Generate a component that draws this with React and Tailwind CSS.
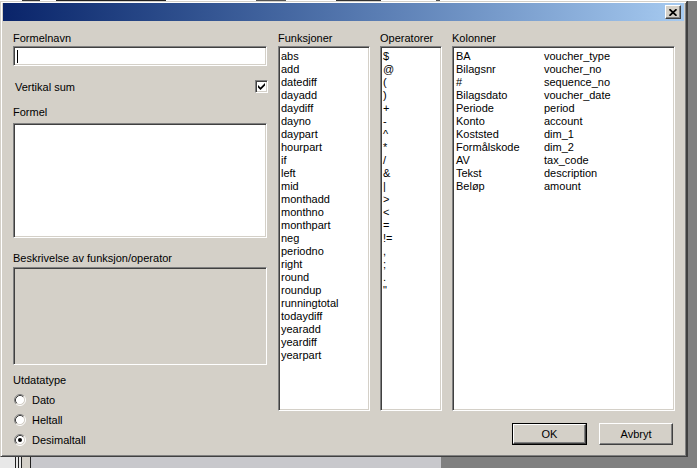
const funksjoner = [
  'abs', 'add', 'datediff', 'dayadd', 'daydiff', 'dayno', 'daypart', 'hourpart', 'if', 'left', 'mid',
  'monthadd', 'monthno', 'monthpart', 'neg', 'periodno', 'right', 'round', 'roundup', 'runningtotal',
  'todaydiff', 'yearadd', 'yeardiff', 'yearpart',
]

const operatorer = ['$', '@', '(', ')', '+', '-', '^', '*', '/', '&', '|', '>', '<', '=', '!=', ',', ';', '.', '"']

const kolonner = [
  ['BA', 'voucher_type'],
  ['Bilagsnr', 'voucher_no'],
  ['#', 'sequence_no'],
  ['Bilagsdato', 'voucher_date'],
  ['Periode', 'period'],
  ['Konto', 'account'],
  ['Koststed', 'dim_1'],
  ['Formålskode', 'dim_2'],
  ['AV', 'tax_code'],
  ['Tekst', 'description'],
  ['Beløp', 'amount'],
]

// classic 3d bevels
const sunken =
  'border border-t-[#808080] border-l-[#808080] border-r-white border-b-white shadow-[inset_1px_1px_0_#404040,inset_-1px_-1px_0_#d4d0c8]'
const raised =
  'border border-t-white border-l-white border-r-[#404040] border-b-[#404040] shadow-[inset_-1px_-1px_0_#808080]'

function Radio({ checked, label }) {
  return (
    <div className="flex h-[20px] items-center">
      <svg width="12" height="12" viewBox="0 0 12 12" className="ml-[1px] mr-[6px]">
        <circle cx="6" cy="6" r="4.5" fill="white" />
        <path d="M9.89 2.11 A5.5 5.5 0 0 0 2.11 9.89" fill="none" stroke="#808080" strokeWidth="1" />
        <path d="M2.11 9.89 A5.5 5.5 0 0 0 9.89 2.11" fill="none" stroke="#ffffff" strokeWidth="1" />
        <path d="M9.18 2.82 A4.5 4.5 0 0 0 2.82 9.18" fill="none" stroke="#404040" strokeWidth="1" />
        <path d="M2.82 9.18 A4.5 4.5 0 0 0 9.18 2.82" fill="none" stroke="#d4d0c8" strokeWidth="1" />
        {checked && <circle cx="6" cy="6" r="2" fill="black" />}
      </svg>
      <span>{label}</span>
    </div>
  )
}

export default function App() {
  return (
    <div className="flex h-[468px] w-[697px] flex-col overflow-hidden bg-[#808080] font-['Liberation_Sans',Arial,sans-serif] text-[11px] leading-[13px] text-black">
      {/* window behind, top edge */}
      <div className="flex h-[1px] shrink-0 bg-white">
        <div className="ml-[22px] w-[18px] bg-[#333]" />
        <div className="ml-[16px] w-[110px] bg-[#222]" />
        <div className="ml-[90px] w-[30px] bg-[#555]" />
        <div className="ml-[50px] w-[45px] bg-[#333]" />
        <div className="ml-[55px] w-[4px] bg-[#555]" />
      </div>

      <div className="flex shrink-0">
        {/* dialog */}
        <div className="flex h-[456px] w-[687px] flex-col border border-t-[#d4d0c8] border-l-[#d4d0c8] border-r-[#404040] border-b-[#404040] bg-[#d4d0c8] px-[2px] pt-[1px] shadow-[inset_1px_1px_0_#fff,inset_-1px_-1px_0_#808080]">
          <div className="flex h-[18px] shrink-0 items-center justify-end bg-linear-to-r from-[#0a246a] to-[#a6caf0] pr-[3px]">
            <div className={`flex h-[14px] w-[16px] items-center justify-center bg-[#d4d0c8] ${raised}`}>
              <svg width="8" height="7" viewBox="0 0 8 7">
                <path d="M0.5 0.2 L7.5 6.8 M7.5 0.2 L0.5 6.8" stroke="black" strokeWidth="1.7" />
              </svg>
            </div>
          </div>

          <div className="flex flex-1 pl-[10px] pr-[8px] pt-[10px]">
            {/* left column */}
            <div className="flex w-[254px] flex-col">
              <div className="h-[13px] pt-[1px]">Formelnavn</div>
              <div className={`mt-[2px] flex h-[20px] items-center bg-white pl-[3px] ${sunken}`}>
                <div className="h-[13px] w-[1px] bg-black" />
              </div>
              <div className="mt-[14px] flex h-[13px] items-center justify-between">
                <span className="ml-[2px] pt-[2px]">Vertikal sum</span>
                <div className={`mr-[-1px] flex h-[13px] w-[13px] items-center justify-center bg-white ${sunken}`}>
                  <svg width="7" height="7" viewBox="0 0 7 7">
                    <path d="M0 2 L0 4.5 L2.5 7 L7 2.5 L7 0 L2.5 4.5 Z" fill="black" />
                  </svg>
                </div>
              </div>
              <div className="mt-[11px] h-[13px] pt-[2px]">Formel</div>
              <div className={`mt-[6px] h-[115px] bg-white ${sunken}`} />
              <div className="mt-[13px] h-[13px] pt-[1px]">Beskrivelse av funksjon/operator</div>
              <div className={`mt-[3px] h-[98px] bg-[#d4d0c8] ${sunken}`} />
              <div className="mt-[8px] h-[13px] pt-[1px]">Utdatatype</div>
              <div className="mt-[4px] flex flex-col">
                <Radio label="Dato" />
                <Radio label="Heltall" />
                <Radio label="Desimaltall" checked />
              </div>
            </div>

            {/* right part */}
            <div className="ml-[11px] flex flex-1 flex-col">
              <div className="flex">
                <div className="flex w-[92px] flex-col">
                  <div className="h-[13px] pt-[1px]">Funksjoner</div>
                  <div className={`mt-[2px] h-[365px] bg-white pl-[2px] pt-[3px] ${sunken}`}>
                    {funksjoner.map((f) => (
                      <div key={f} className="h-[13px] whitespace-nowrap">{f}</div>
                    ))}
                  </div>
                </div>
                <div className="ml-[10px] flex w-[62px] flex-col">
                  <div className="h-[13px] pt-[1px]">Operatorer</div>
                  <div className={`mt-[2px] h-[365px] bg-white pl-[2px] pt-[3px] ${sunken}`}>
                    {operatorer.map((o, i) => (
                      <div key={i} className="h-[13px] whitespace-nowrap">{o}</div>
                    ))}
                  </div>
                </div>
                <div className="ml-[10px] flex w-[223px] flex-col">
                  <div className="h-[13px] pt-[1px]">Kolonner</div>
                  <div className={`mt-[2px] h-[365px] bg-white pl-[3px] pt-[3px] ${sunken}`}>
                    {kolonner.map(([a, b]) => (
                      <div key={a} className="flex h-[13px] whitespace-nowrap">
                        <span className="w-[88px]">{a}</span>
                        <span>{b}</span>
                      </div>
                    ))}
                  </div>
                </div>
              </div>

              <div className="mt-[12px] flex w-[397px] justify-end gap-[12px] pr-[2px]">
                <div className="border border-black">
                  <div className={`flex h-[20px] w-[73px] items-center justify-center bg-[#d4d0c8] ${raised}`}>OK</div>
                </div>
                <div className={`flex h-[22px] w-[74px] items-center justify-center bg-[#d4d0c8] ${raised}`}>Avbryt</div>
              </div>
            </div>
          </div>
        </div>
        <div className="w-[1px] bg-[#404040]" />
      </div>

      {/* window behind, bottom */}
      <div className="flex flex-1">
        <div className="w-[15px] bg-[#e8e8e8]" />
        <div className="w-[1px] bg-[#202020]" />
        <div className="w-[2px] bg-[#e8e8e8]" />
        <div className="w-[1px] bg-[#202020]" />
        <div className="w-[2px] bg-[#e8e8e8]" />
        <div className="w-[1px] bg-[#202020]" />
        <div className="w-[8px] bg-[#d4d0c8]" />
        <div className="w-[1px] bg-[#202020]" />
        <div className="w-[410px] bg-[#c8c8cc]" />
        <div className="flex-1 bg-[#808080]" />
      </div>
    </div>
  )
}
